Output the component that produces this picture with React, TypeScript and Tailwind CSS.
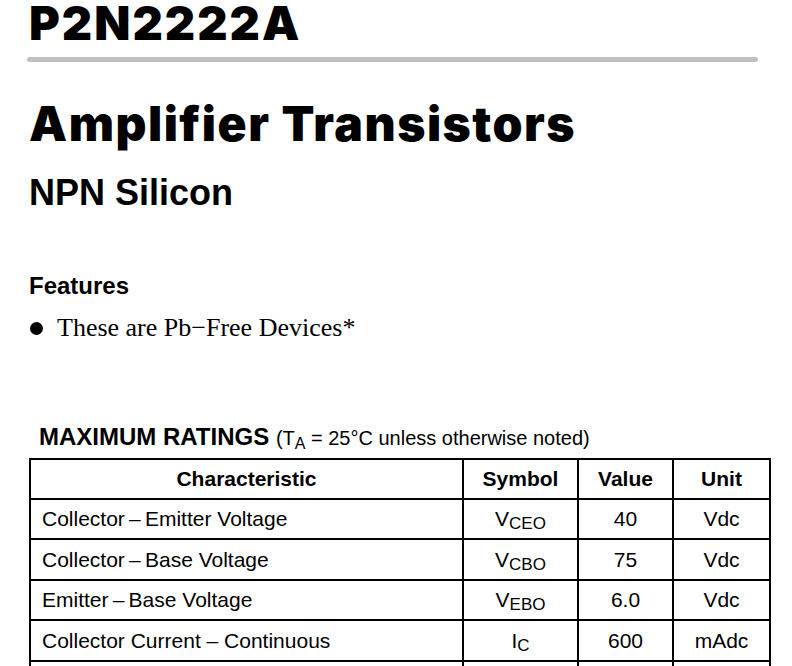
import React from "react";

const sans = { fontFamily: '"Liberation Sans", Arial, sans-serif' };

function Sym({ b, s }: { b: string; s: string }) {
  return (
    <span>
      {b}
      <sub className="text-[17px] relative top-[3px] align-baseline">{s}</sub>
    </span>
  );
}

const rows: { c: string; s: React.ReactNode; v: string; u: string; h: string }[] = [
  { c: "Collector\u2009\u2013\u2009Emitter Voltage", s: <Sym b="V" s="CEO" />, v: "40", u: "Vdc", h: "h-[40px]" },
  { c: "Collector\u2009\u2013\u2009Base Voltage", s: <Sym b="V" s="CBO" />, v: "75", u: "Vdc", h: "h-[41px]" },
  { c: "Emitter\u2009\u2013\u2009Base Voltage", s: <Sym b="V" s="EBO" />, v: "6.0", u: "Vdc", h: "h-[40px]" },
  { c: "Collector Current \u2013 Continuous", s: <Sym b="I" s="C" />, v: "600", u: "mAdc", h: "h-[41px]" },
  { c: "", s: "", v: "", u: "", h: "h-[40px]" },
];

export default function App() {
  return (
    <div className="w-[792px] h-[666px] overflow-hidden bg-white text-black">
      <div className="pl-[29px] pt-[1px]">
        <h1
          className="text-[47px] leading-[44px] font-black tracking-[2px]"
          style={{ fontFamily: 'Inter, "Liberation Sans", sans-serif' }}
        >
          P2N2222A
        </h1>
      </div>
      <div className="ml-[27px] mt-[12px] w-[731px] h-[5px] rounded-full bg-[#c0c0c0]" />
      <div className="pl-[29px]" style={{ fontFamily: 'Inter, "Liberation Sans", sans-serif' }}>
        <h2 className="mt-[38px] text-[48px] leading-[48px] font-black tracking-[1.5px]">Amplifier Transistors</h2>
      </div>
      <div className="pl-[29px]" style={sans}>
        <h3 className="mt-[26px] text-[36px] leading-[38px] font-bold">NPN Silicon</h3>
        <h4 className="mt-[60px] text-[24px] leading-[28px] font-bold">Features</h4>
        <div
          className="mt-[13px] flex items-center text-[26px] leading-[30px]"
          style={{ fontFamily: '"Liberation Serif", "Times New Roman", serif' }}
        >
          <span className="w-[13px] h-[13px] rounded-full bg-black ml-[1px] mr-[14px]" />
          <span>These are Pb{"\u2212"}Free Devices*</span>
        </div>
      </div>
      <div className="pl-[39px] mt-[81px] text-[24px] leading-[26px]" style={sans}>
        <span className="font-bold">MAXIMUM RATINGS</span>{" "}
        <span className="text-[20px]">
          (T<sub className="text-[16px] align-baseline relative top-[4px]">A</sub> = 25°C unless otherwise noted)
        </span>
      </div>
      <div className="pl-[29px] mt-[7px]">
        <table className="border-collapse border-2 border-black text-[21px]" style={sans}>
          <thead>
            <tr className="h-[40px]">
              <th className="w-[433px] border-2 border-black font-bold">Characteristic</th>
              <th className="w-[115px] border-2 border-black font-bold">Symbol</th>
              <th className="w-[95px] border-2 border-black font-bold">Value</th>
              <th className="w-[97px] border-2 border-black font-bold">Unit</th>
            </tr>
          </thead>
          <tbody>
            {rows.map((r, i) => (
              <tr key={i} className={r.h}>
                <td className="border-2 border-black pl-[11px] text-left">{r.c}</td>
                <td className="border-2 border-black text-center">{r.s}</td>
                <td className="border-2 border-black text-center">{r.v}</td>
                <td className="border-2 border-black text-center">{r.u}</td>
              </tr>
            ))}
          </tbody>
        </table>
      </div>
    </div>
  );
}
